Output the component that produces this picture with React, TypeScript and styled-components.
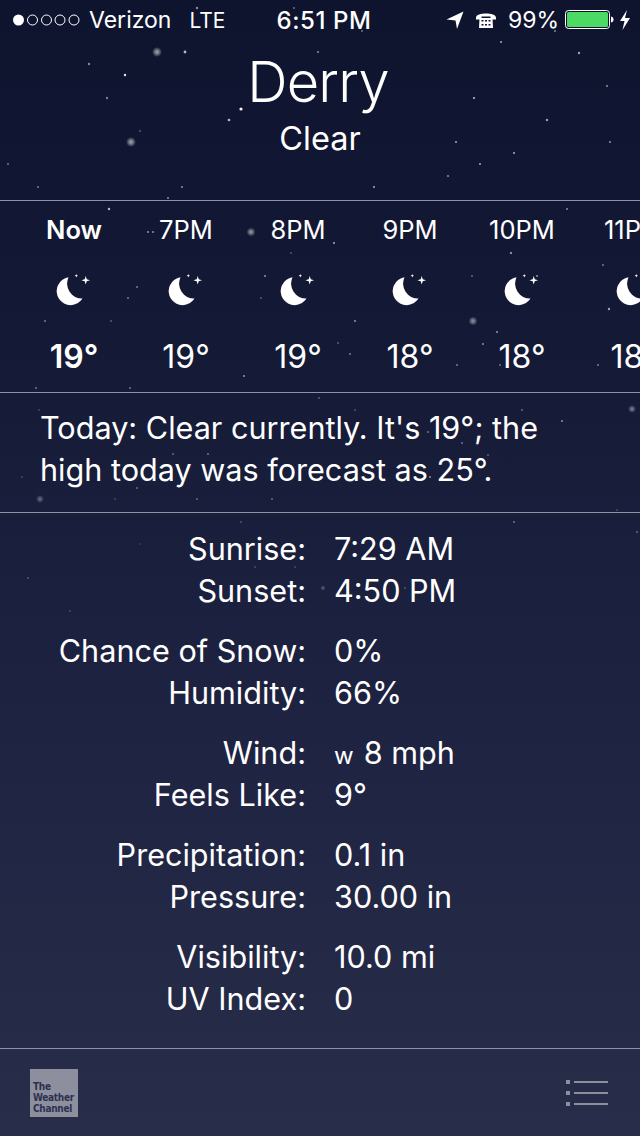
import React from 'react';
import styled, { createGlobalStyle } from 'styled-components';

const GlobalStyle = createGlobalStyle`
  html, body {
    margin: 0;
    padding: 0;
    background: #0f1430;
  }
  * {
    box-sizing: border-box;
  }
`;

const Screen = styled.div`
  position: relative;
  width: 640px;
  height: 1136px;
  overflow: hidden;
  display: flex;
  flex-direction: column;
  color: #fff;
  font-family: Inter, 'Liberation Sans', sans-serif;
  background: linear-gradient(180deg, #0e132e 0%, #141a36 30%, #1d2240 60%, #282d4a 100%);
`;

const Stars = styled.svg`
  position: absolute;
  left: 0;
  top: 0;
`;

const Content = styled.div`
  position: relative;
  display: flex;
  flex-direction: column;
  flex: 1;
`;

const StatusBar = styled.div`
  height: 40px;
  padding: 0 9px 0 13px;
  display: grid;
  grid-template-columns: 1fr auto 1fr;
  align-items: center;
  font-size: 23px;
  font-weight: 400;
`;

const StatusLeft = styled.div`
  display: flex;
  align-items: center;
`;

const Carrier = styled.span`
  margin-left: 8px;
`;

const Network = styled.span`
  margin-left: 18px;
  font-size: 21px;
`;

const Clock = styled.div`
  margin-left: 4px;
  font-weight: 500;
  letter-spacing: 0.6px;
  font-size: 24px;
`;

const StatusRight = styled.div`
  display: flex;
  align-items: center;
  justify-content: flex-end;
`;

const Percent = styled.span`
  margin-left: 12px;
`;

const Battery = styled.span`
  margin: 0 0 0 6px;
  display: flex;
  align-items: center;
`;

const Header = styled.header`
  height: 160px;
  display: flex;
  flex-direction: column;
  align-items: center;
`;

const City = styled.h1`
  margin: 7px 0 0;
  font-size: 56px;
  line-height: 70px;
  font-weight: 350;
  letter-spacing: -0.8px;
  transform: translateX(-2px);
`;

const Condition = styled.div`
  font-size: 32.5px;
  line-height: 44px;
  font-weight: 375;
`;

const Hourly = styled.section`
  height: 193px;
  padding-left: 18px;
  display: flex;
  overflow: hidden;
  border-top: 1px solid #8f92a3;
  border-bottom: 1px solid #8f92a3;
`;

const HourColumn = styled.div`
  flex: 0 0 112px;
  display: flex;
  flex-direction: column;
  align-items: center;
`;

const HourLabel = styled.div<{ $now?: boolean }>`
  margin-top: 12px;
  height: 34px;
  line-height: 34px;
  font-size: 25.5px;
  font-weight: ${p => (p.$now ? 600 : 375)};
`;

const HourIcon = styled.svg`
  margin-top: 27px;
  margin-left: -1px;
`;

const HourTemp = styled.div<{ $now?: boolean }>`
  margin-top: 31px;
  height: 40px;
  line-height: 40px;
  font-size: 32px;
  font-weight: ${p => (p.$now ? 600 : 375)};
`;

const Summary = styled.p`
  margin: 0;
  height: 120px;
  padding: 14px 20px 0 40px;
  font-size: 30.6px;
  line-height: 42px;
  font-weight: 375;
  border-bottom: 1px solid #8f92a3;
`;

const Details = styled.section`
  padding-top: 15px;
  display: flex;
  flex-direction: column;
  gap: 18px;
`;

const DetailGroup = styled.div`
  display: flex;
  flex-direction: column;
`;

const DetailRow = styled.div`
  display: grid;
  grid-template-columns: 306px 1fr;
  column-gap: 28px;
  height: 42px;
  line-height: 42px;
  font-size: 30.6px;
  font-weight: 375;
`;

const DetailLabel = styled.span`
  text-align: right;
`;

const WindDir = styled.span`
  font-size: 24px;
  font-weight: 375;
  margin-right: 10px;
`;

const Footer = styled.footer`
  position: absolute;
  left: 0;
  right: 0;
  bottom: 0;
  height: 88px;
  padding: 0 31px 0 30px;
  display: flex;
  align-items: center;
  justify-content: space-between;
  border-top: 1px solid #8f92a3;
`;

const Logo = styled.div`
  width: 48px;
  height: 48px;
  padding: 12px 0 0 3px;
  background: #8d8f9f;
  color: #2c3150;
  font-family: 'DejaVu Sans', sans-serif;
  font-stretch: condensed;
  font-size: 10px;
  letter-spacing: -0.3px;
  line-height: 11px;
  font-weight: 700;
`;

type Star = [number, number, number, number];

// x, y, radius, opacity
const STARS: Star[] = [
  [157, 52, 5, 0.7], [185, 52, 1.4, 0.7], [89, 64, 1.2, 0.5], [125, 75, 1.2, 0.9],
  [107, 98, 1.2, 0.45], [241, 109, 1.6, 0.95], [229, 120, 1.3, 0.7], [140, 131, 1, 0.3],
  [131, 142, 5, 0.7], [8, 164, 1.1, 0.4], [38, 187, 1.1, 0.4], [182, 187, 1.1, 0.5],
  [168, 198, 1, 0.5], [197, 8, 1.2, 0.5], [294, 8, 1, 0.4], [318, 52, 1.1, 0.5],
  [501, 42, 1.1, 0.6], [579, 53, 1.2, 0.6], [607, 86, 1.1, 0.5], [474, 98, 1.1, 0.7],
  [547, 120, 1.2, 0.6], [456, 142, 1.1, 0.6], [610, 142, 1.1, 0.5], [514, 153, 1.1, 0.6],
  [480, 164, 1.1, 0.6], [448, 176, 1.1, 0.5], [374, 187, 1.1, 0.6], [555, 31, 1, 0.5],
  [362, 31, 1, 0.4], [109, 209, 1.2, 0.7], [148, 232, 1.1, 0.5], [153, 232, 1.1, 0.5],
  [251, 232, 4.5, 0.65], [334, 243, 1.1, 0.6], [291, 253, 1.1, 0.25], [265, 276, 1.1, 0.5],
  [261, 298, 1, 0.3], [137, 287, 1.1, 0.4], [128, 298, 1.1, 0.4], [45, 321, 1.1, 0.4],
  [111, 321, 1, 0.3], [36, 388, 1, 0.4], [130, 388, 1, 0.4], [567, 209, 1, 0.5],
  [511, 253, 1.2, 0.5], [537, 276, 1.1, 0.5], [603, 265, 1.1, 0.4], [609, 309, 1.2, 0.6],
  [497, 332, 1.1, 0.5], [483, 344, 1, 0.5], [500, 365, 1, 0.4], [598, 365, 1.1, 0.4],
  [355, 321, 1.1, 0.5], [338, 343, 1, 0.3], [350, 354, 1.1, 0.4], [244, 376, 1.1, 0.5],
  [472, 276, 1.1, 0.3], [473, 321, 4.5, 0.6], [457, 365, 1.1, 0.4], [319, 398, 1, 0.3],
  [355, 410, 1, 0.25], [522, 410, 1, 0.35], [632, 409, 4, 0.5], [562, 421, 1, 0.5],
  [428, 432, 1, 0.4], [462, 443, 1, 0.4], [488, 455, 1, 0.3], [430, 477, 1, 0.5],
  [617, 510, 1, 0.2], [514, 522, 1, 0.4], [637, 532, 1, 0.35], [323, 588, 2, 0.2],
  [405, 588, 1, 0.25], [39, 410, 1, 0.2], [173, 454, 1, 0.35], [208, 454, 1, 0.4],
  [22, 477, 1, 0.2], [137, 488, 1, 0.35], [40, 499, 4, 0.4], [115, 499, 1, 0.2],
  [197, 499, 1, 0.35], [272, 499, 1, 0.35], [241, 522, 1, 0.25], [28, 578, 1, 0.25],
  [295, 567, 1, 0.2], [255, 567, 1, 0.2], [140, 544, 1, 0.12], [70, 611, 1, 0.2],
];

const HOURS = [
  { label: 'Now', temp: '19°', now: true },
  { label: '7PM', temp: '19°' },
  { label: '8PM', temp: '19°' },
  { label: '9PM', temp: '18°' },
  { label: '10PM', temp: '18°' },
  { label: '11PM', temp: '18°' },
];

const DETAILS = [
  [['Sunrise:', '7:29 AM'], ['Sunset:', '4:50 PM']],
  [['Chance of Snow:', '0%'], ['Humidity:', '66%']],
  [['Wind:', '8 mph'], ['Feels Like:', '9°']],
  [['Precipitation:', '0.1 in'], ['Pressure:', '30.00 in']],
  [['Visibility:', '10.0 mi'], ['UV Index:', '0']],
];

function SignalDots() {
  return (
    <svg width="68" height="14" viewBox="0 0 68 14">
      <circle cx="5.5" cy="7" r="5.5" fill="#fff" />
      {[19.5, 33.5, 47, 61].map(cx => (
        <circle key={cx} cx={cx} cy="7" r="5" fill="none" stroke="#fff" strokeWidth="1" />
      ))}
    </svg>
  );
}

function MoonIcon() {
  return (
    <HourIcon width="36" height="32" viewBox="0 0 36 32">
      <path d="M12.5 3.3 A14 14 0 1 0 26.5 24.6 A15 15 0 0 1 12.5 3.3 Z" fill="#fff" />
      <path d="M29.7 2 L30.7 5.3 L34 6.3 L30.7 7.3 L29.7 10.6 L28.7 7.3 L25.4 6.3 L28.7 5.3 Z" fill="#fff" />
      <path d="M20.3 0 L20.8 1.2 L22 1.7 L20.8 2.2 L20.3 3.4 L19.8 2.2 L18.6 1.7 L19.8 1.2 Z" fill="#fff" />
    </HourIcon>
  );
}

function StatusIcons() {
  return (
    <>
      <svg width="18" height="18" viewBox="0 0 18 18">
        <path d="M0.5 8.5 L17.5 0.5 L11 18 L9.5 9.5 Z" fill="#fff" />
      </svg>
      <svg width="20" height="17" viewBox="0 0 20 17" style={{ marginLeft: 12 }}>
        <path d="M0 5.5 C0 0 20 0 20 5.5 L20 7.5 L14.5 7.5 L14.5 4.5 L5.5 4.5 L5.5 7.5 L0 7.5 Z" fill="#fff" />
        <path d="M3.5 6 H16.5 L17 16 H3 Z" fill="#fff" />
        <path
          d="M5.5 8 h2 v1.6 h-2 z M9 8 h2 v1.6 h-2 z M12.5 8 h2 v1.6 h-2 z M5.5 12 h2 v1.6 h-2 z M9 12 h2 v1.6 h-2 z M12.5 12 h2 v1.6 h-2 z"
          fill="#10152f"
        />
      </svg>
    </>
  );
}

function BatteryIcon() {
  return (
    <Battery>
      <svg width="66" height="20" viewBox="0 0 66 20">
        <rect x="0.5" y="0.5" width="44" height="18" rx="3" fill="none" stroke="#fff" strokeWidth="1" />
        <rect x="2" y="2" width="41" height="15" rx="1.5" fill="#4cd964" />
        <path d="M46 6.5 C48 7 48.5 8 48.5 9.5 C48.5 11 48 12 46 12.5 Z" fill="#fff" />
        <path d="M62 0 L55 11 L59.5 11 L57.5 20 L65 8 L60 8 Z" fill="#fff" />
      </svg>
    </Battery>
  );
}

export default function App() {
  return (
    <Screen>
      <GlobalStyle />
      <Stars width="640" height="1136" viewBox="0 0 640 1136">
        <defs>
          <radialGradient id="glow">
            <stop offset="0%" stopColor="#fff" stopOpacity="0.9" />
            <stop offset="45%" stopColor="#fff" stopOpacity="0.55" />
            <stop offset="100%" stopColor="#fff" stopOpacity="0" />
          </radialGradient>
        </defs>
        {STARS.map(([x, y, r, o]) => (
          <circle key={`${x}-${y}`} cx={x} cy={y} r={r} fill={r > 2 ? 'url(#glow)' : '#fff'} opacity={o} />
        ))}
      </Stars>
      <Content>
        <StatusBar>
          <StatusLeft>
            <SignalDots />
            <Carrier>Verizon</Carrier>
            <Network>LTE</Network>
          </StatusLeft>
          <Clock>6:51 PM</Clock>
          <StatusRight>
            <StatusIcons />
            <Percent>99%</Percent>
            <BatteryIcon />
          </StatusRight>
        </StatusBar>
        <Header>
          <City>Derry</City>
          <Condition>Clear</Condition>
        </Header>
        <Hourly>
          {HOURS.map(h => (
            <HourColumn key={h.label}>
              <HourLabel $now={h.now}>{h.label}</HourLabel>
              <MoonIcon />
              <HourTemp $now={h.now}>{h.temp}</HourTemp>
            </HourColumn>
          ))}
        </Hourly>
        <Summary>
          Today: Clear currently. It's 19°; the
          <br />
          high today was forecast as 25°.
        </Summary>
        <Details>
          {DETAILS.map(group => (
            <DetailGroup key={group[0][0]}>
              {group.map(([label, value]) => (
                <DetailRow key={label}>
                  <DetailLabel>{label}</DetailLabel>
                  <span>
                    {label === 'Wind:' && <WindDir>w</WindDir>}
                    {value}
                  </span>
                </DetailRow>
              ))}
            </DetailGroup>
          ))}
        </Details>
        <Footer>
          <Logo>
            The
            <br />
            Weather
            <br />
            Channel
          </Logo>
          <svg width="43" height="26" viewBox="0 0 43 26">
            {[0, 11, 22].map(y => (
              <g key={y} fill="#8d8f9f">
                <rect x="0" y={y} width="4" height="4" />
                <rect x="8" y={y + 1} width="34" height="2" />
              </g>
            ))}
          </svg>
        </Footer>
      </Content>
    </Screen>
  );
}
